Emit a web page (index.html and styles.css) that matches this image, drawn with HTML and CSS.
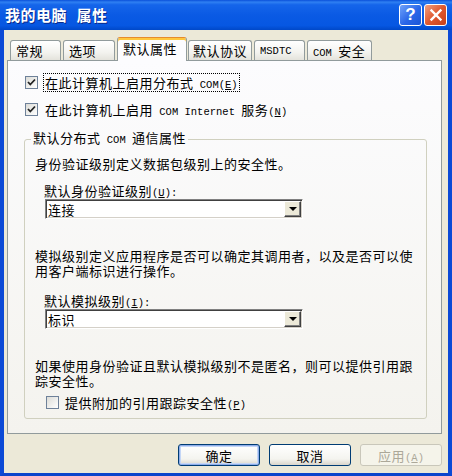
FILE: index.html
```html
<!DOCTYPE html>
<html lang="zh-CN">
<head>
  <meta charset="UTF-8" />
  <meta name="viewport" content="width=device-width, initial-scale=1.0"/>
  <title>我的电脑 属性</title>
  <link rel="stylesheet" href="styles.css">
</head>
<body>

  <div class="window">
    <div class="titlebar">
      <span class="title">我的电脑 属性</span>
      <div class="title-buttons">
        <span class="tbtn help">?</span>
        <span class="tbtn close">
          <svg width="14" height="14" viewBox="0 0 14 14">
            <path d="M2.5 2.5 L11.5 11.5 M11.5 2.5 L2.5 11.5" stroke="#fff" stroke-width="2.4" stroke-linecap="square"/>
          </svg>
        </span>
      </div>
    </div>

    <div class="frame">
      <div class="tabs">
        <div class="tab"><span>常规</span></div>
        <div class="tab"><span>选项</span></div>
        <div class="tab active"><span>默认属性</span></div>
        <div class="tab"><span>默认协议</span></div>
        <div class="tab"><span class="lat">MSDTC</span></div>
        <div class="tab"><span><span class="lat">COM </span>安全</span></div>
      </div>

      <div class="panel">
        <div class="check-row">
          <span class="box"><svg width="11" height="11" viewBox="0 0 11 11"><polyline points="2,5 4.3,7.5 9,2.5" fill="none" stroke="#222" stroke-width="1.8"/></svg></span>
          <span class="focus">在此计算机上启用分布式<span class="lat"> COM(<u>E</u>)</span></span>
        </div>
        <div class="check-row second">
          <span class="box"><svg width="11" height="11" viewBox="0 0 11 11"><polyline points="2,5 4.3,7.5 9,2.5" fill="none" stroke="#222" stroke-width="1.8"/></svg></span>
          <span class="plain">在此计算机上启用<span class="lat"> COM Internet </span>服务<span class="lat">(<u>N</u>)</span></span>
        </div>

        <fieldset class="group">
          <legend>默认分布式<span class="lat"> COM </span>通信属性</legend>
          <div class="group-body">
            <p class="note">身份验证级别定义数据包级别上的安全性。</p>
            <div class="field">
              <div class="field-label">默认身份验证级别<span class="lat">(<u>U</u>):</span></div>
              <div class="select"><span class="value">连接</span><span class="arrow"><i></i></span></div>
            </div>

            <p class="note wide">模拟级别定义应用程序是否可以确定其调用者，以及是否可以使用客户端标识进行操作。</p>
            <div class="field">
              <div class="field-label">默认模拟级别<span class="lat">(<u>I</u>):</span></div>
              <div class="select"><span class="value">标识</span><span class="arrow"><i></i></span></div>
            </div>

            <p class="note wide">如果使用身份验证且默认模拟级别不是匿名，则可以提供引用跟踪安全性。</p>
            <div class="check-row third">
              <span class="box"></span>
              <span class="plain">提供附加的引用跟踪安全性<span class="lat">(<u>P</u>)</span></span>
            </div>
          </div>
        </fieldset>
      </div>

      <div class="buttons">
        <button class="btn default">确定</button>
        <button class="btn">取消</button>
        <button class="btn" disabled>应用<span class="lat">(<u>A</u>)</span></button>
      </div>
    </div>
  </div>

</body>
</html>
```

FILE: styles.css
```css
* {
  box-sizing: border-box;
}

body {
  margin: 0;
  font-family: "Noto Sans CJK SC", sans-serif;
  font-size: 13px;
  letter-spacing: 0.5px;
  color: #000;
  background: #ECE9D8;
}

/* latin runs are half width, like the old bitmap font */
.lat {
  font-family: "Liberation Mono", monospace;
  font-size: 10.5px;
  letter-spacing: 0;
  line-height: 0;
}

.window {
  width: 452px;
  height: 476px;
  display: flex;
  flex-direction: column;
}

/* title bar */
.titlebar {
  height: 30px;
  flex: none;
  display: flex;
  align-items: center;
  justify-content: space-between;
  padding: 0 5px;
  background: linear-gradient(#0A50DA 0%, #2F80F2 7%, #1565EA 16%, #0A5AE4 50%, #0657E2 85%, #0048C8 100%);
}

.title {
  font-family: "Liberation Mono", "Noto Sans CJK SC", sans-serif;
  color: #fff;
  font-weight: bold;
  font-size: 15px;
  letter-spacing: 0.5px;
  text-shadow: 1px 1px 0 #0A2A8C;
}

.title-buttons {
  display: flex;
  gap: 2px;
}

.tbtn {
  width: 23px;
  height: 22px;
  border: 1px solid #fff;
  border-radius: 3px;
  display: flex;
  align-items: center;
  justify-content: center;
  color: #fff;
}

.help {
  background: linear-gradient(135deg, #6FA2FA, #2A66E8 55%, #1B55D6);
  font-family: "Liberation Sans", sans-serif;
  font-weight: bold;
  font-size: 17px;
  letter-spacing: 0;
}

.close {
  background: linear-gradient(135deg, #F0A080, #E0582F 50%, #C7401C);
}

/* window frame */
.frame {
  flex: 1;
  display: flex;
  flex-direction: column;
  background: #ECE9D8;
  border-left: 4px solid #0C4AD6;
  border-right: 4px solid #0C4AD6;
  border-bottom: 3px solid #0C45CC;
  padding: 0 6px 0 3px;
}

/* tabs */
.tabs {
  display: flex;
  align-items: flex-end;
  height: 23px;
  margin-top: 7px;
  padding-left: 3px;
}

.tab {
  height: 20px;
  margin-right: 2px;
  padding-left: 5px;
  border: 1px solid #919B9C;
  border-bottom: none;
  border-radius: 3px 3px 0 0;
  background: linear-gradient(#FFFFFF, #F3F3EF 60%, #E4E3DC);
  display: flex;
  align-items: center;
  line-height: 15px;
}

.tab:nth-child(1) { width: 51px; }
.tab:nth-child(2) { width: 52px; }
.tab:nth-child(4) { width: 64px; padding-left: 4px; }
.tab:nth-child(5) { width: 51px; }
.tab:nth-child(6) { width: 65px; }

.tab.active {
  width: 70px;
  height: 24px;
  margin-right: 1px;
  margin-bottom: -1px;
  position: relative;
  z-index: 1;
  background: #FCFCFE;
  border-top: 1px solid #E68B2C;
  box-shadow: inset 0 2px 0 #FFC73C;
  padding-bottom: 2px;
}

/* tab page */
.panel {
  height: 374px;
  border: 1px solid #919B9C;
  background: linear-gradient(#FCFCFE, #F4F3EE);
  padding: 12px 14px 0 16px;
}

.check-row {
  display: flex;
  align-items: center;
  height: 19px;
  margin-left: 1px;
}

.check-row.second {
  margin-top: 8px;
}

.check-row.third {
  margin-top: 5px;
  margin-left: 11px;
}

.box {
  width: 13px;
  height: 13px;
  flex: none;
  border: 1px solid #6E8199;
  background: linear-gradient(135deg, #DCDCD7, #FFFFFF);
  margin-right: 5px;
  display: flex;
}

.third .box {
  margin-right: 6px;
}

.focus {
  border: 1px dotted #000;
  padding: 0 1px;
  height: 19px;
  line-height: 17px;
}

.plain {
  padding-left: 2px;
  line-height: 15px;
}

.third .plain {
  padding-left: 0;
}

/* group box */
.group {
  margin: 11px 0 0 0;
  padding: 7px 6px 6px 6px;
  border: 1px solid #D0D0BF;
  border-radius: 3px;
  min-width: 0;
}

.group legend {
  padding: 0 2px 4px;
  line-height: 15px;
}

.group-body {
  padding-left: 4px;
}

.note {
  margin: 0;
  line-height: 15px;
}

.note.wide {
  margin-top: 29px;
}

.field {
  margin-top: 12px;
  margin-left: 9px;
}

.note.wide + .field {
  margin-top: 15px;
}

.field-label {
  line-height: 15px;
}

.select {
  display: flex;
  align-items: center;
  width: 258px;
  height: 20px;
  margin-top: 1px;
  margin-left: 1px;
  background: #fff;
  border: 1px solid;
  border-color: #808080 #FFFFFF #FFFFFF #808080;
  box-shadow: inset 1px 1px 0 #404040, inset -1px -1px 0 #D4D0C8;
}

.value {
  padding-left: 2px;
  line-height: 15px;
}

.arrow {
  margin-left: auto;
  margin-right: 1px;
  width: 17px;
  height: 16px;
  background: #ECE9D8;
  border: 1px solid;
  border-color: #FFFFFF #404040 #404040 #FFFFFF;
  box-shadow: inset -1px -1px 0 #808080;
  display: flex;
  align-items: center;
  justify-content: center;
}

.arrow i {
  width: 0;
  height: 0;
  border-left: 4px solid transparent;
  border-right: 4px solid transparent;
  border-top: 4px solid #000;
}

/* dialog buttons */
.buttons {
  display: flex;
  justify-content: flex-end;
  gap: 9px;
  margin-top: 10px;
}

.btn {
  width: 82px;
  height: 22px;
  padding: 0;
  border: 1px solid #003C74;
  border-radius: 3px;
  background: linear-gradient(#FFFFFF, #F4F4EF 70%, #D9D5CB);
  font-family: inherit;
  font-size: 13px;
  letter-spacing: 0.5px;
  color: #000;
  line-height: 15px;
}

.btn.default {
  box-shadow: inset 0 0 0 1px #8FAEEA, inset 0 0 0 2px #C4D6F6;
}

.btn:disabled {
  border-color: #C9C7BA;
  background: #F5F4EA;
  color: #ACA899;
}
```
